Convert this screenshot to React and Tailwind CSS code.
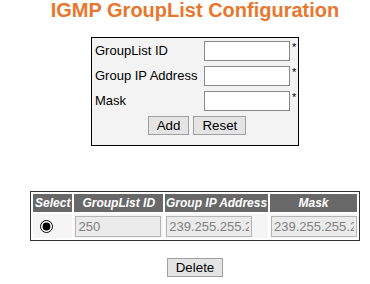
import React from 'react';

const fields = [
  { label: 'GroupList ID' },
  { label: 'Group IP Address' },
  { label: 'Mask' },
];

const rows = [{ id: '250', ip: '239.255.255.250', mask: '239.255.255.255' }];

export default function App() {
  return (
    <div className="w-[370px] h-[284px] overflow-hidden bg-white pl-[20px] flex flex-col items-center font-['Liberation_Sans',Arial,sans-serif]">
      <h1 className="text-[20px] leading-[20px] font-bold text-[#e8772e] whitespace-nowrap">
        IGMP GroupList Configuration
      </h1>

      <div className="mt-[17px] w-[208px] border border-black bg-[#f3f3f3] pt-[3px] pb-[10px] flex flex-col gap-[5px]">
        {fields.map((f) => (
          <div key={f.label} className="flex items-center h-[20px]">
            <span className="w-[112px] pl-[3px] text-[13px] text-black">{f.label}</span>
            <input className="w-[86px] h-[20px] border border-[#8a8a8a] bg-white" />
            <span className="self-start ml-[2px] mt-[1px] text-[11px] leading-[11px] text-black">*</span>
          </div>
        ))}
        <div className="flex justify-center gap-[4px] pl-[4px]">
          <button className="h-[19px] px-[8px] text-[13.33px] leading-[15px] border border-[#a0a0a0] bg-[#e4e4e4] text-black">
            Add
          </button>
          <button className="h-[19px] px-[8px] text-[13.33px] leading-[15px] border border-[#a0a0a0] bg-[#e4e4e4] text-black">
            Reset
          </button>
        </div>
      </div>

      <table className="mt-[45px] w-[330px] border border-[#333] border-separate border-spacing-[2px] text-[12px]">
        <thead>
          <tr className="text-white font-bold italic">
            <th className="w-[40px] h-[18px] bg-[#686868] p-0 leading-[18px]">Select</th>
            <th className="w-[89px] bg-[#686868] p-0">GroupList ID</th>
            <th className="w-[105px] bg-[#686868] p-0">Group IP Address</th>
            <th className="bg-[#686868] p-0">Mask</th>
          </tr>
        </thead>
        <tbody>
          {rows.map((r) => (
            <tr key={r.id} className="bg-[#f5f5f5]">
              <td className="h-[24px] p-0 pl-[7px] text-left">
                <input type="radio" defaultChecked className="w-[13px] h-[13px] align-middle accent-black" />
              </td>
              <td className="p-0 pl-[1px]">
                <input disabled value={r.id} className="w-[86px] h-[21px] px-[2px] border border-[#b5b5b5] bg-[#ebebeb] text-[13px] text-[#808080]" />
              </td>
              <td className="p-0 pl-[1px]">
                <input disabled value={r.ip} className="w-[86px] h-[21px] px-[2px] border border-[#b5b5b5] bg-[#ebebeb] text-[13px] text-[#808080]" />
              </td>
              <td className="p-0 pl-[1px]">
                <input disabled value={r.mask} className="w-[86px] h-[21px] px-[2px] border border-[#b5b5b5] bg-[#ebebeb] text-[13px] text-[#808080]" />
              </td>
            </tr>
          ))}
        </tbody>
      </table>

      <button className="mt-[17px] h-[19px] px-[8px] text-[13.33px] leading-[15px] border border-[#a0a0a0] bg-[#e4e4e4] text-black">
        Delete
      </button>
    </div>
  );
}
